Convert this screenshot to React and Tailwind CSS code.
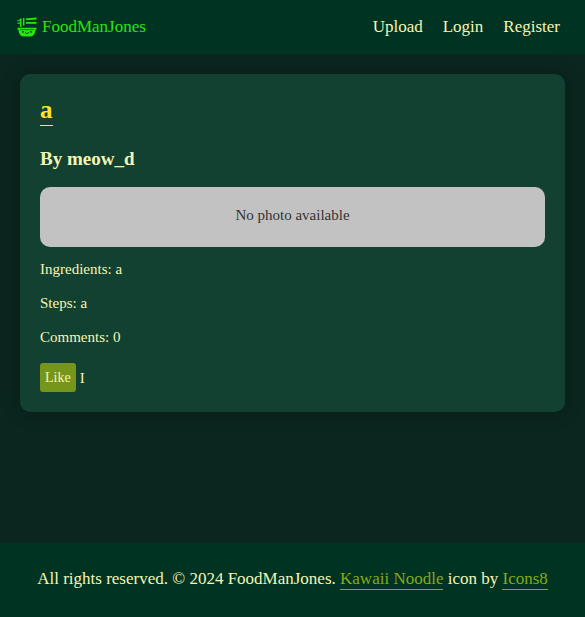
function NoodleIcon() {
  return (
    <svg viewBox="0 0 20 20" className="size-5 shrink-0" fill="none" aria-hidden="true">
      <g stroke="#28e60a" strokeWidth="1.5">
        <path d="M.5 3.500l3-.3M.5 6.200h3" strokeWidth="1.2" />
        <path d="M3.800 1.500V10M6.700 1v7.500" />
        <path d="M9 2.400l10.500-.9" strokeWidth="1.800" />
        <path d="M9 5.900h10.500" strokeWidth="1.800" />
      </g>
      <path d="M.5 10.800h19v1.800h-1c-.2 4-2 7-5 7h-7c-3 0-4.800-3-5-7h-1z" fill="#28e60a" />
      <path d="M3 12.600h14" stroke="#003322" strokeWidth="0.600" />
      <g fill="#003322">
        <circle cx="6" cy="14.800" r="0.900" />
        <circle cx="14" cy="14.800" r="0.900" />
      </g>
      <path d="M8.300 15.200c.4 1.800 3 1.800 3.400 0" stroke="#003322" strokeWidth="1" />
    </svg>
  );
}

const navItems = ["Upload", "Login", "Register"];
const details = ["Ingredients: a", "Steps: a", "Comments: 0"];

function FooterLink({ children }) {
  return (
    <a href="#" className="border-b border-[#86a91c] pb-px text-[#86a91c]">
      {children}
    </a>
  );
}

export default function App() {
  return (
    <div className="flex min-h-screen flex-col bg-[#0a261e] font-['Liberation_Serif',serif] text-[15px] leading-6 text-[#f5f5b5]">
      <header className="flex h-[54px] items-center justify-between bg-[#003322] pr-[25px] pl-[17px] text-[17px]">
        <a href="#" className="flex items-center gap-[5px] text-[#28e60a]">
          <NoodleIcon />
          FoodManJones
        </a>
        <nav className="flex gap-5">
          {navItems.map((item) => (
            <a key={item} href="#">{item}</a>
          ))}
        </nav>
      </header>

      <main className="flex-1 p-5">
        <article className="rounded-[10px] bg-[#124131] p-5 shadow-[0_0_20px_rgba(0,0,0,0.2)]">
          <h2 className="flex text-[25px] leading-[31px] font-bold text-[#ffe02e]">
            <a href="#" className="border-b border-[#f5f032]">a</a>
          </h2>
          <h3 className="mt-[21px] text-[19px] leading-6 font-bold">By meow_d</h3>
          <div className="mt-4 flex h-[60px] items-center justify-center rounded-[10px] bg-[#c2c2c2] pb-1 text-[#333333]">
            No photo available
          </div>
          <div className="mt-2.5 flex flex-col gap-2.5">
            {details.map((line) => (
              <p key={line}>{line}</p>
            ))}
          </div>
          <div className="mt-3.5 flex items-center gap-1">
            <button type="button" className="h-[29px] rounded-[3px] bg-[#75961b] px-[5px] text-sm">
              Like
            </button>
            <span>I</span>
          </div>
        </article>
      </main>

      <footer className="bg-[#003322] px-5 pt-6 pb-[26px] text-center text-[17px]">
        All rights reserved. © 2024 FoodManJones. <FooterLink>Kawaii Noodle</FooterLink> icon by{" "}
        <FooterLink>Icons8</FooterLink>
      </footer>
    </div>
  );
}
